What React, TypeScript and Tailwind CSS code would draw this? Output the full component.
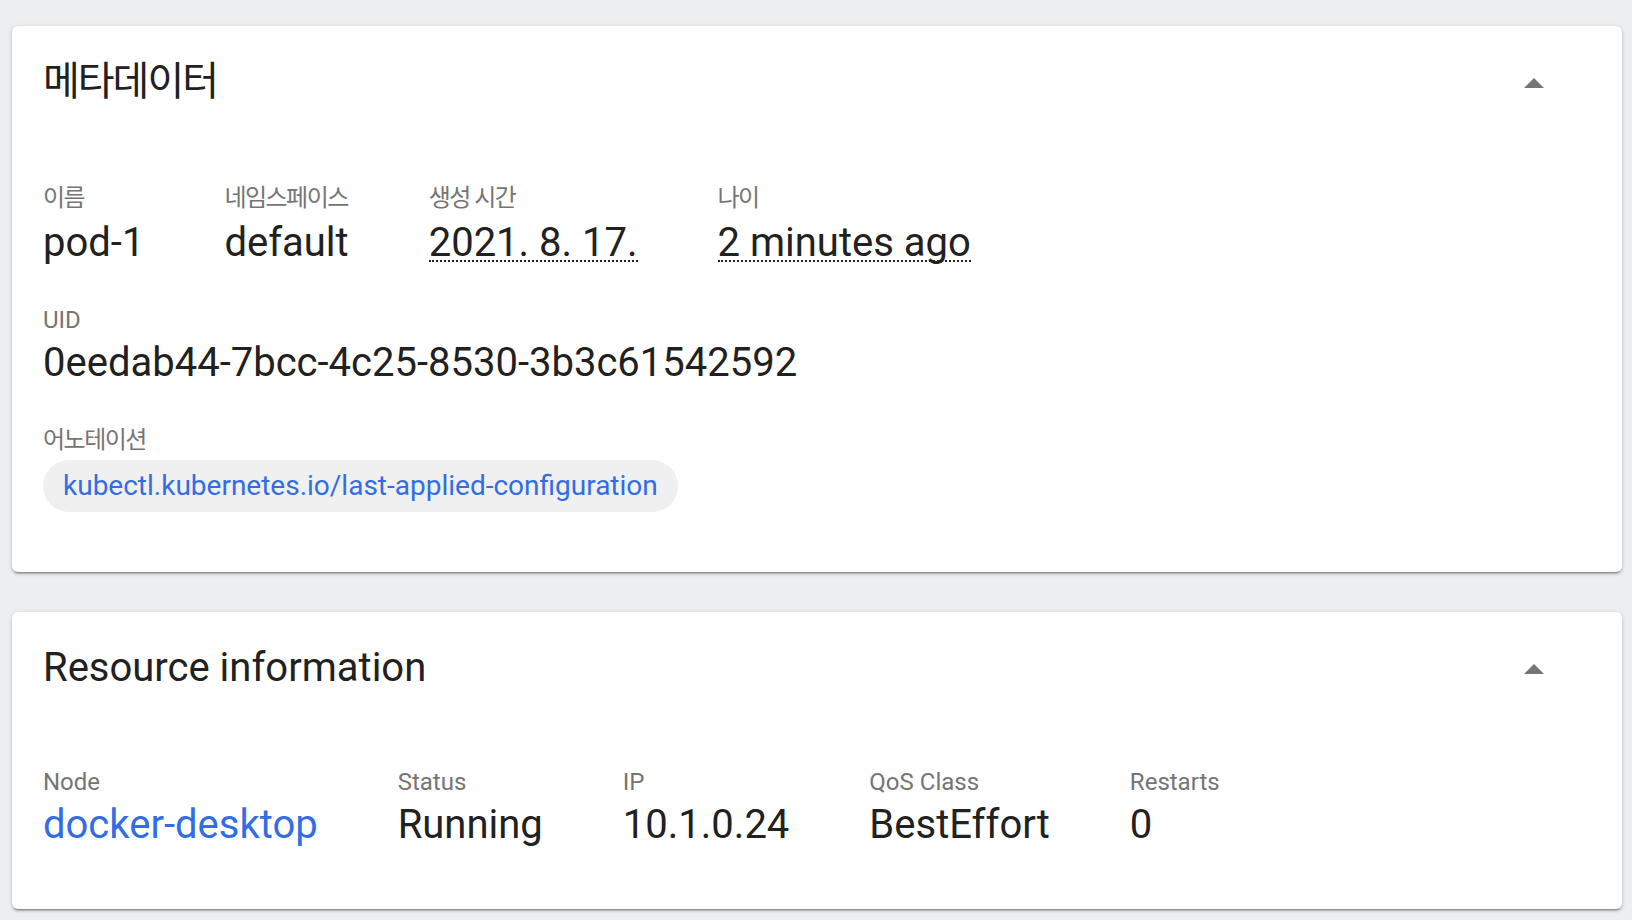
import React from "react";

function ArrowUp() {
  return (
    <svg width="48" height="48" viewBox="0 0 24 24" className="mt-[2px] shrink-0">
      <path d="M7 14l5-5 5 5z" fill="#757575" />
    </svg>
  );
}

function Card({
  title,
  titleClass,
  bodyClass,
  children,
}: {
  title: string;
  titleClass?: string;
  bodyClass?: string;
  children: React.ReactNode;
}) {
  return (
    <div className="rounded-[6px] bg-white pl-[31px] pr-[64px] pt-[32px] shadow-[0_3px_2px_-2px_rgba(0,0,0,0.35),0_2px_3px_0_rgba(0,0,0,0.14),0_1px_5px_0_rgba(0,0,0,0.12)]">
      <div className="flex items-start justify-between">
        <h2 className={"text-[40px] leading-[48px] font-normal text-[#212121] " + (titleClass ?? "")}>{title}</h2>
        <ArrowUp />
      </div>
      <div className={"flex flex-col gap-y-[39px] " + (bodyClass ?? "")}>{children}</div>
    </div>
  );
}

function Property({ label, ko, children }: { label: string; ko?: boolean; children: React.ReactNode }) {
  return (
    <div className="mr-[80px] flex flex-col">
      <div
        className={
          ko
            ? "text-[24px] leading-[28px] tracking-[-1.5px] text-[#757575]"
            : "text-[24px] leading-[28px] text-[#757575]"
        }
      >
        {label}
      </div>
      <div
        className={
          ko
            ? "mt-[7px] whitespace-nowrap text-[40px] leading-[48px] text-[#212121]"
            : "mt-[5px] whitespace-nowrap text-[40px] leading-[48px] text-[#212121]"
        }
      >
        {children}
      </div>
    </div>
  );
}

function Dotted({ children }: { children: React.ReactNode }) {
  return <span className="inline-block border-b-2 border-dotted border-[#212121] leading-[35px]">{children}</span>;
}

export default function App() {
  return (
    <div className="min-h-screen bg-[#edeef0] pl-[12px] pr-[10px] pt-[26px] pb-[12px] font-['Roboto','Noto_Sans_CJK_KR',sans-serif]">
      <div className="flex flex-col gap-[40px]">
        <Card title="메타데이터" titleClass="tracking-[-2px]" bodyClass="mt-[76px] pb-[60px]">
          <div className="flex">
            <Property label="이름" ko>pod-1</Property>
            <Property label="네임스페이스" ko>default</Property>
            <Property label="생성 시간" ko>
              <Dotted>2021. 8. 17.</Dotted>
            </Property>
            <Property label="나이" ko>
              <Dotted>2 minutes ago</Dotted>
            </Property>
          </div>
          <div className="flex">
            <Property label="UID">0eedab44-7bcc-4c25-8530-3b3c61542592</Property>
          </div>
          <div className="flex flex-col">
            <div className="text-[24px] leading-[28px] tracking-[-1.5px] text-[#757575]">어노테이션</div>
            <div className="mt-[6px] flex">
              <span className="inline-flex h-[52px] items-center rounded-full bg-[#f0f0f0] px-[20px] text-[28px] leading-[32px] text-[#326de6]">
                kubectl.kubernetes.io/last-applied-configuration
              </span>
            </div>
          </div>
        </Card>

        <Card title="Resource information" bodyClass="mt-[74px] pb-[60px]">
          <div className="flex">
            <Property label="Node">
              <span className="text-[#326de6]">docker-desktop</span>
            </Property>
            <Property label="Status">Running</Property>
            <Property label="IP">10.1.0.24</Property>
            <Property label="QoS Class">BestEffort</Property>
            <Property label="Restarts">0</Property>
          </div>
        </Card>
      </div>
    </div>
  );
}
